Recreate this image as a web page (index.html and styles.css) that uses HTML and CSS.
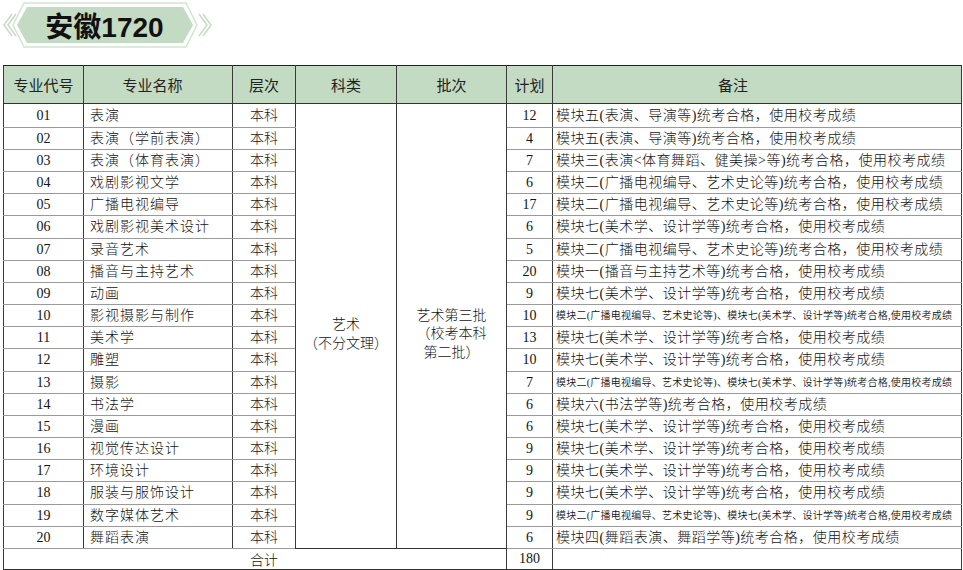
FILE: index.html
```html
<!DOCTYPE html>
<html lang="zh-CN">
<head>
<meta charset="utf-8">
<title>安徽1720</title>
<link rel="stylesheet" href="styles.css">
</head>
<body>
<div class="page">
  <div class="banner">
    <svg class="banner-bg" viewBox="0 0 215 52" width="215" height="52" aria-hidden="true">
      <polyline points="12,14 4,25 12,36" fill="none" stroke="#c8ddc8" stroke-width="1.6"/>
      <polyline points="16,14 8,25 16,36" fill="none" stroke="#c8ddc8" stroke-width="1.6"/>
      <polygon points="24,3 186,3 197,25 186,47 24,47 13,25" fill="none" stroke="#d2e5d2" stroke-width="1.5"/>
      <polygon points="27,7 183,7 193,25 183,43 27,43 17,25" fill="#c3dbc3"/>
      <polyline points="199,14 207,25 199,36" fill="none" stroke="#c8ddc8" stroke-width="1.6"/>
      <polyline points="203,14 211,25 203,36" fill="none" stroke="#c8ddc8" stroke-width="1.6"/>
    </svg>
    <span class="banner-title">安徽1720</span>
  </div>

  <table class="plan">
    <colgroup>
      <col class="c-code"><col class="c-name"><col class="c-level"><col class="c-cat"><col class="c-batch"><col class="c-num"><col class="c-note">
    </colgroup>
    <thead>
      <tr class="head">
        <th>专业代号</th><th class="th-name">专业名称</th><th>层次</th><th>科类</th><th>批次</th><th>计划</th><th class="th-note">备注</th>
      </tr>
    </thead>
    <tbody>
      <tr><td class="code">01</td><td class="name">表演</td><td class="level">本科</td>
        <td class="merged cat" rowspan="20">艺术<br>（不分文理）</td>
        <td class="merged batch" rowspan="20">艺术第三批<br>（校考本科<br>第二批）</td>
        <td class="num">12</td><td class="note">模块五(表演、导演等)统考合格，使用校考成绩</td></tr>
      <tr><td class="code">02</td><td class="name">表演（学前表演）</td><td class="level">本科</td><td class="num">4</td><td class="note">模块五(表演、导演等)统考合格，使用校考成绩</td></tr>
      <tr><td class="code">03</td><td class="name">表演（体育表演）</td><td class="level">本科</td><td class="num">7</td><td class="note">模块三(表演&lt;体育舞蹈、健美操&gt;等)统考合格，使用校考成绩</td></tr>
      <tr><td class="code">04</td><td class="name">戏剧影视文学</td><td class="level">本科</td><td class="num">6</td><td class="note">模块二(广播电视编导、艺术史论等)统考合格，使用校考成绩</td></tr>
      <tr><td class="code">05</td><td class="name">广播电视编导</td><td class="level">本科</td><td class="num">17</td><td class="note">模块二(广播电视编导、艺术史论等)统考合格，使用校考成绩</td></tr>
      <tr><td class="code">06</td><td class="name">戏剧影视美术设计</td><td class="level">本科</td><td class="num">6</td><td class="note">模块七(美术学、设计学等)统考合格，使用校考成绩</td></tr>
      <tr><td class="code">07</td><td class="name">录音艺术</td><td class="level">本科</td><td class="num">5</td><td class="note">模块二(广播电视编导、艺术史论等)统考合格，使用校考成绩</td></tr>
      <tr><td class="code">08</td><td class="name">播音与主持艺术</td><td class="level">本科</td><td class="num">20</td><td class="note">模块一(播音与主持艺术等)统考合格，使用校考成绩</td></tr>
      <tr><td class="code">09</td><td class="name">动画</td><td class="level">本科</td><td class="num">9</td><td class="note">模块七(美术学、设计学等)统考合格，使用校考成绩</td></tr>
      <tr><td class="code">10</td><td class="name">影视摄影与制作</td><td class="level">本科</td><td class="num">10</td><td class="note small">模块二(广播电视编导、艺术史论等)、模块七(美术学、设计学等)统考合格,使用校考成绩</td></tr>
      <tr><td class="code">11</td><td class="name">美术学</td><td class="level">本科</td><td class="num">13</td><td class="note">模块七(美术学、设计学等)统考合格，使用校考成绩</td></tr>
      <tr><td class="code">12</td><td class="name">雕塑</td><td class="level">本科</td><td class="num">10</td><td class="note">模块七(美术学、设计学等)统考合格，使用校考成绩</td></tr>
      <tr><td class="code">13</td><td class="name">摄影</td><td class="level">本科</td><td class="num">7</td><td class="note small">模块二(广播电视编导、艺术史论等)、模块七(美术学、设计学等)统考合格,使用校考成绩</td></tr>
      <tr><td class="code">14</td><td class="name">书法学</td><td class="level">本科</td><td class="num">6</td><td class="note">模块六(书法学等)统考合格，使用校考成绩</td></tr>
      <tr><td class="code">15</td><td class="name">漫画</td><td class="level">本科</td><td class="num">6</td><td class="note">模块七(美术学、设计学等)统考合格，使用校考成绩</td></tr>
      <tr><td class="code">16</td><td class="name">视觉传达设计</td><td class="level">本科</td><td class="num">9</td><td class="note">模块七(美术学、设计学等)统考合格，使用校考成绩</td></tr>
      <tr><td class="code">17</td><td class="name">环境设计</td><td class="level">本科</td><td class="num">9</td><td class="note">模块七(美术学、设计学等)统考合格，使用校考成绩</td></tr>
      <tr><td class="code">18</td><td class="name">服装与服饰设计</td><td class="level">本科</td><td class="num">9</td><td class="note">模块七(美术学、设计学等)统考合格，使用校考成绩</td></tr>
      <tr><td class="code">19</td><td class="name">数字媒体艺术</td><td class="level">本科</td><td class="num">9</td><td class="note small">模块二(广播电视编导、艺术史论等)、模块七(美术学、设计学等)统考合格,使用校考成绩</td></tr>
      <tr><td class="code">20</td><td class="name">舞蹈表演</td><td class="level">本科</td><td class="num">6</td><td class="note">模块四(舞蹈表演、舞蹈学等)统考合格，使用校考成绩</td></tr>
      <tr class="total"><td class="total-label" colspan="5">合计</td><td class="num">180</td><td class="note"></td></tr>
      <tr class="after"><td></td><td></td><td></td><td></td><td></td><td></td><td></td></tr>
    </tbody>
  </table>
</div>
</body>
</html>
```

FILE: styles.css
```css
html, body {
  margin: 0;
  padding: 0;
  background: #ffffff;
}

body {
  font-family: "Liberation Serif", "Noto Sans CJK SC", serif;
  color: #141414;
  overflow: hidden;
}

.page {
  width: 963px;
  height: 570px;
  padding-left: 3px;
  box-sizing: border-box;
  overflow: hidden;
}

.banner {
  position: relative;
  width: 215px;
  height: 52px;
  margin-left: -3px;
  margin-bottom: 13px;
  display: flex;
  align-items: center;
  justify-content: center;
}

.banner-bg {
  position: absolute;
  left: 0;
  top: 0;
}

.banner-title {
  position: relative;
  font-family: "Liberation Sans", "Noto Sans CJK SC", sans-serif;
  font-weight: 700;
  font-size: 28px;
  color: #111;
  margin-left: -6px;
  margin-top: -2px;
}

.plan {
  border-collapse: collapse;
  table-layout: fixed;
  width: 958px;
}

.c-code { width: 80px; }
.c-name { width: 149px; }
.c-level { width: 63px; }
.c-cat { width: 101px; }
.c-batch { width: 110px; }
.c-num { width: 46px; }
.c-note { width: 409px; }

.plan th,
.plan td {
  border: 1px solid #3a3a3a;
  padding: 0;
  white-space: nowrap;
  overflow: hidden;
}

.plan td {
  border-top-color: #9a9a9a;
  border-bottom-color: #9a9a9a;
  font-size: 14px;
  line-height: 16px;
  font-weight: 300;
}

.head {
  height: 38px;
  background: #c3dbc2;
}

.plan th {
  font-family: "Noto Sans CJK SC", "Liberation Sans", sans-serif;
  font-weight: 400;
  font-size: 15px;
  color: #222;
  border-top: 1.5px solid #222;
  border-bottom: 1px solid #333;
}

.plan th.th-name {
  padding-right: 11px;
}

.plan th.th-note {
  padding-right: 48px;
}

.plan tbody tr {
  height: 22px;
}

.plan tbody tr:nth-child(6n) {
  height: 23px;
}

.plan tbody tr:first-child {
  height: 24px;
}

.plan td.code,
.plan td.level,
.plan td.num {
  text-align: center;
}

.plan td.name {
  padding-left: 6px;
  letter-spacing: 1px;
}

.plan td.note {
  padding-left: 3px;
  letter-spacing: 0.5px;
}

.plan td.note.small {
  font-size: 10px;
  letter-spacing: 0.25px;
  font-weight: 350;
}

.plan td.merged {
  text-align: center;
  vertical-align: middle;
  line-height: 18.5px;
  padding-top: 17px;
  border-top-color: #333;
  border-bottom-color: #333;
}

.plan tr.total {
  height: 21px;
}

.plan tr.total td {
  border-top-color: #333;
  border-bottom-color: #333;
}

.plan td.total-label {
  font-family: "Noto Sans CJK SC", "Liberation Sans", sans-serif;
  text-align: center;
  padding-left: 18px;
}

.plan tr.after {
  height: 10px;
}
```
